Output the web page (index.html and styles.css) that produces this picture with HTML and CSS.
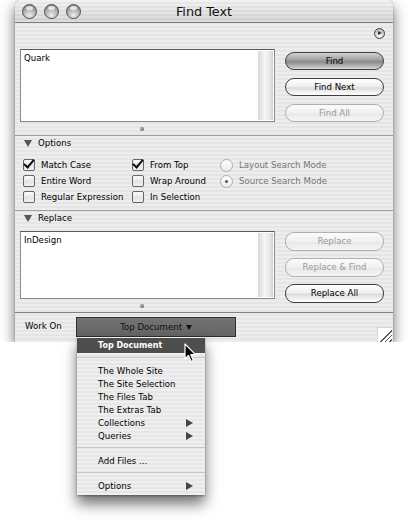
FILE: index.html
```html
<!DOCTYPE html>
<html lang="en">
  <head>
    <meta charset="utf-8">
    <title>Find Text</title>
    <link rel="stylesheet" href="styles.css">
  </head>

  <body>
    <div class="window">
      <div class="titlebar">
        <div class="lights">
          <span class="light"></span>
          <span class="light"></span>
          <span class="light"></span>
        </div>
        <div class="title">Find Text</div>
        <div></div>
      </div>

      <!-- Find -->
      <div class="findPane">
        <div class="infoRow"><span class="infoButton"></span></div>
        <div class="fieldRow">
          <div class="field findField">
            <div class="fieldText">Quark</div>
            <div class="scroll"></div>
          </div>
          <div class="buttons">
            <div class="aqua default">Find</div>
            <div class="aqua">Find Next</div>
            <div class="aqua disabled">Find All</div>
          </div>
        </div>
        <div class="splitter"><span class="dot"></span></div>
      </div>

      <!-- Options -->
      <div class="options">
        <div class="disclosure"><span class="tri"></span>Options</div>
        <div class="optionGrid">
          <label class="check"><span class="box on"></span>Match Case</label>
          <label class="check"><span class="box on"></span>From Top</label>
          <label class="radio dim"><span class="ring"></span>Layout Search Mode</label>
          <label class="check"><span class="box"></span>Entire Word</label>
          <label class="check"><span class="box"></span>Wrap Around</label>
          <label class="radio dim"><span class="ring on"></span>Source Search Mode</label>
          <label class="check"><span class="box"></span>Regular Expression</label>
          <label class="check"><span class="box"></span>In Selection</label>
        </div>
      </div>

      <!-- Replace -->
      <div class="replacePane">
        <div class="disclosure"><span class="tri"></span>Replace</div>
        <div class="fieldRow replaceRow">
          <div class="field replaceField">
            <div class="fieldText">InDesign</div>
            <div class="scroll"></div>
          </div>
          <div class="buttons replaceButtons">
            <div class="aqua disabled">Replace</div>
            <div class="aqua disabled">Replace &amp; Find</div>
            <div class="aqua">Replace All</div>
          </div>
        </div>
        <div class="splitter"><span class="dot"></span></div>
      </div>

      <div class="footer">
        <span class="workOn">Work On</span>
        <div class="popup">Top Document <span class="popArrow"></span></div>
        <span class="grip"></span>
      </div>
    </div>

    <!-- popup menu, open -->
    <div class="menu">
      <div class="item active">Top Document</div>
      <div class="sep"></div>
      <div class="item">The Whole Site</div>
      <div class="item">The Site Selection</div>
      <div class="item">The Files Tab</div>
      <div class="item">The Extras Tab</div>
      <div class="item sub">Collections</div>
      <div class="item sub">Queries</div>
      <div class="sep"></div>
      <div class="item">Add Files ...</div>
      <div class="sep"></div>
      <div class="item sub">Options</div>
    </div>

    <svg class="cursor" width="13" height="20" viewBox="0 0 13 20">
      <path d="M1 1 L1 16 L4.5 12.5 L7.2 18.5 L9.4 17.5 L6.8 11.7 L11.5 11.7 Z" fill="#000" stroke="#fff" stroke-width="1.2" stroke-linejoin="round"/>
    </svg>
  </body>
</html>
```

FILE: styles.css
```css
body {
  margin: 0;
  background: #fff;
  font-family: "DejaVu Sans", sans-serif;
  font-size: 8.6px;
  color: #000;
}
.window {
  position: relative;
  width: 378px;
  height: 342px;
  margin-left: 15px;
  border-radius: 6px 6px 0 0;
  background: repeating-linear-gradient(#ededed 0 2px, #e5e5e5 2px 4px);
  box-shadow: 0 6px 14px rgba(0, 0, 0, 0.6), 0 0 1px rgba(0, 0, 0, 0.7);
  display: flex;
  flex-direction: column;
}

/* title bar */
.titlebar {
  height: 22px;
  border-bottom: 1px solid #7c7c7c;
  border-radius: 6px 6px 0 0;
  background: repeating-linear-gradient(rgba(255,255,255,0.2) 0 2px, rgba(0,0,0,0.02) 2px 4px),
    linear-gradient(#efefef, #d2d2d2);
  display: grid;
  grid-template-columns: 1fr auto 1fr;
  align-items: center;
}
.lights {
  display: flex;
  gap: 7px;
  padding-left: 7px;
  padding-top: 1px;
}
.light {
  width: 13px;
  height: 13px;
  border-radius: 50%;
  border: 1px solid #4e4e4e;
  background: radial-gradient(circle at 50% 80%, #eeeeee 0, #b8b8b8 45%, #707070 100%);
  position: relative;
}
.light::after {
  content: "";
  position: absolute;
  left: 3px;
  top: 1px;
  width: 7px;
  height: 4px;
  border-radius: 50%;
  background: rgba(255, 255, 255, 0.7);
}
.title {
  font-size: 12.8px;
  color: #111;
}

/* find pane */
.findPane {
  padding: 5px 8px 0 5px;
  border-bottom: 1px solid #a0a0a0;
}
.infoRow {
  display: flex;
  justify-content: flex-end;
  height: 11px;
  margin-bottom: 10px;
}
.infoButton {
  width: 9px;
  height: 9px;
  border: 1px solid #444;
  border-radius: 50%;
  background: radial-gradient(circle at 50% 75%, #fafafa, #a8a8a8);
  position: relative;
}
.infoButton::after {
  content: "";
  position: absolute;
  left: 3px;
  top: 2px;
  border-left: 4px solid #333;
  border-top: 2.5px solid transparent;
  border-bottom: 2.5px solid transparent;
}
.fieldRow {
  display: flex;
  gap: 10px;
  height: 73px;
}
.field {
  width: 253px;
  border: 1px solid #8a8a8a;
  border-top-color: #5a5a5a;
  background: #fff;
  display: flex;
}
.fieldText {
  flex: 1;
  padding: 3px 3px;
}
.scroll {
  width: 15px;
  margin: 1px 1px 1px 0;
  background: linear-gradient(90deg, #d8d8d8, #f6f6f6 45%, #e6e6e6 80%, #cfcfcf);
}
.buttons {
  display: flex;
  flex-direction: column;
  gap: 8px;
  padding-top: 3px;
}
.aqua {
  width: 97px;
  height: 16px;
  line-height: 16px;
  text-align: center;
  border: 1px solid #3e3e3e;
  border-radius: 9px;
  background: linear-gradient(#ffffff, #f0f0f0 45%, #dcdcdc 55%, #f4f4f4 85%, #ffffff);
  color: #000;
}
.aqua.default {
  background: linear-gradient(#d2d2d2, #a4a4a4 40%, #8a8a8a 55%, #bababa 85%, #d8d8d8);
}
.aqua.disabled {
  border-color: #b0b0b0;
  color: #999;
  background: linear-gradient(#fbfbfb, #f0f0f0 50%, #e8e8e8 55%, #f6f6f6);
}
.splitter {
  height: 12px;
  width: 244px;
  display: flex;
  justify-content: center;
  align-items: center;
}
.dot {
  width: 4px;
  height: 4px;
  border-radius: 50%;
  background: radial-gradient(circle at 40% 40%, #bbb, #444);
}

/* options */
.options {
  border-bottom: 1px solid #a0a0a0;
  padding-bottom: 5px;
}
.disclosure {
  height: 14px;
  line-height: 14px;
  display: flex;
  align-items: center;
  padding-left: 9px;
}
.tri {
  border-top: 7px solid #555;
  border-left: 4.5px solid transparent;
  border-right: 4.5px solid transparent;
  margin-right: 6px;
}
.optionGrid {
  display: grid;
  grid-template-columns: 109px 88px auto;
  grid-auto-rows: 16px;
  padding: 7px 0 0 8px;
}
.check,
.radio {
  display: flex;
  align-items: center;
  gap: 6px;
}
.box {
  width: 10px;
  height: 10px;
  border: 1px solid #666;
  border-radius: 2px;
  background: linear-gradient(#fdfdfd, #e4e4e4 55%, #f2f2f2);
  position: relative;
}
.box.on::after {
  content: "";
  position: absolute;
  left: 2px;
  top: -3px;
  width: 4px;
  height: 9px;
  border-right: 2.5px solid #111;
  border-bottom: 2.5px solid #111;
  transform: rotate(40deg);
}
.radio.dim {
  color: #777;
}
.ring {
  width: 11px;
  height: 11px;
  border: 1px solid #acacac;
  border-radius: 50%;
  background: linear-gradient(#fdfdfd, #ececec);
  position: relative;
}
.ring.on::after {
  content: "";
  position: absolute;
  left: 4px;
  top: 4px;
  width: 3px;
  height: 3px;
  border-radius: 50%;
  background: #555;
}

/* replace */
.replacePane {
  padding: 0 8px 0 5px;
  border-bottom: 1px solid #808080;
}
.replacePane .disclosure {
  padding-left: 4px;
  margin-bottom: 6px;
}
.replaceRow {
  height: 68px;
}
.replaceButtons {
  padding-top: 1px;
  gap: 7px;
}
.replaceButtons .aqua {
  height: 17px;
  line-height: 17px;
}
.splitter:last-child {
  height: 13px;
}

/* footer */
.footer {
  flex: 1;
  position: relative;
  display: flex;
  align-items: flex-start;
  padding: 4px 0 0 10px;
}
.workOn {
  width: 51px;
  line-height: 19px;
}
.popup {
  width: 158px;
  height: 18px;
  line-height: 18px;
  border: 1px solid #2e2e2e;
  background: linear-gradient(#737373, #646464);
  text-align: center;
  color: #111;
}
.popArrow {
  display: inline-block;
  vertical-align: middle;
  border-top: 5px solid #111;
  border-left: 3.5px solid transparent;
  border-right: 3.5px solid transparent;
  margin-left: 1px;
}
.grip {
  position: absolute;
  right: 1px;
  bottom: 0;
  width: 14px;
  height: 14px;
  border-left: 1px solid #d4d4d4;
  border-top: 1px solid #d4d4d4;
  background: #fff linear-gradient(135deg, transparent 55%, #555 55% 61%, transparent 61% 72%, #555 72% 78%, transparent 78% 88%, #555 88% 94%, transparent 94%);
}

/* menu */
.menu {
  position: absolute;
  left: 77px;
  top: 337px;
  width: 128px;
  padding: 1px 0 2px;
  background: repeating-linear-gradient(#efefef 0 2px, #e6e6e6 2px 4px);
  box-shadow: 0 9px 13px rgba(0, 0, 0, 0.55), 0 1px 2px rgba(0, 0, 0, 0.35);
}
.item {
  height: 13px;
  line-height: 13px;
  padding-left: 21px;
  position: relative;
}
.item.active {
  height: 15px;
  line-height: 15px;
  background: #4e4e4e;
  color: #fff;
  font-weight: bold;
  font-size: 8px;
}
.item.sub::after {
  content: "";
  position: absolute;
  right: 12px;
  top: 2px;
  border-left: 7px solid #444;
  border-top: 4.5px solid transparent;
  border-bottom: 4.5px solid transparent;
}
.sep {
  height: 1px;
  margin: 4px 0 7px;
  background: #c4c4c4;
}
.cursor {
  position: absolute;
  left: 184px;
  top: 343px;
}
```
